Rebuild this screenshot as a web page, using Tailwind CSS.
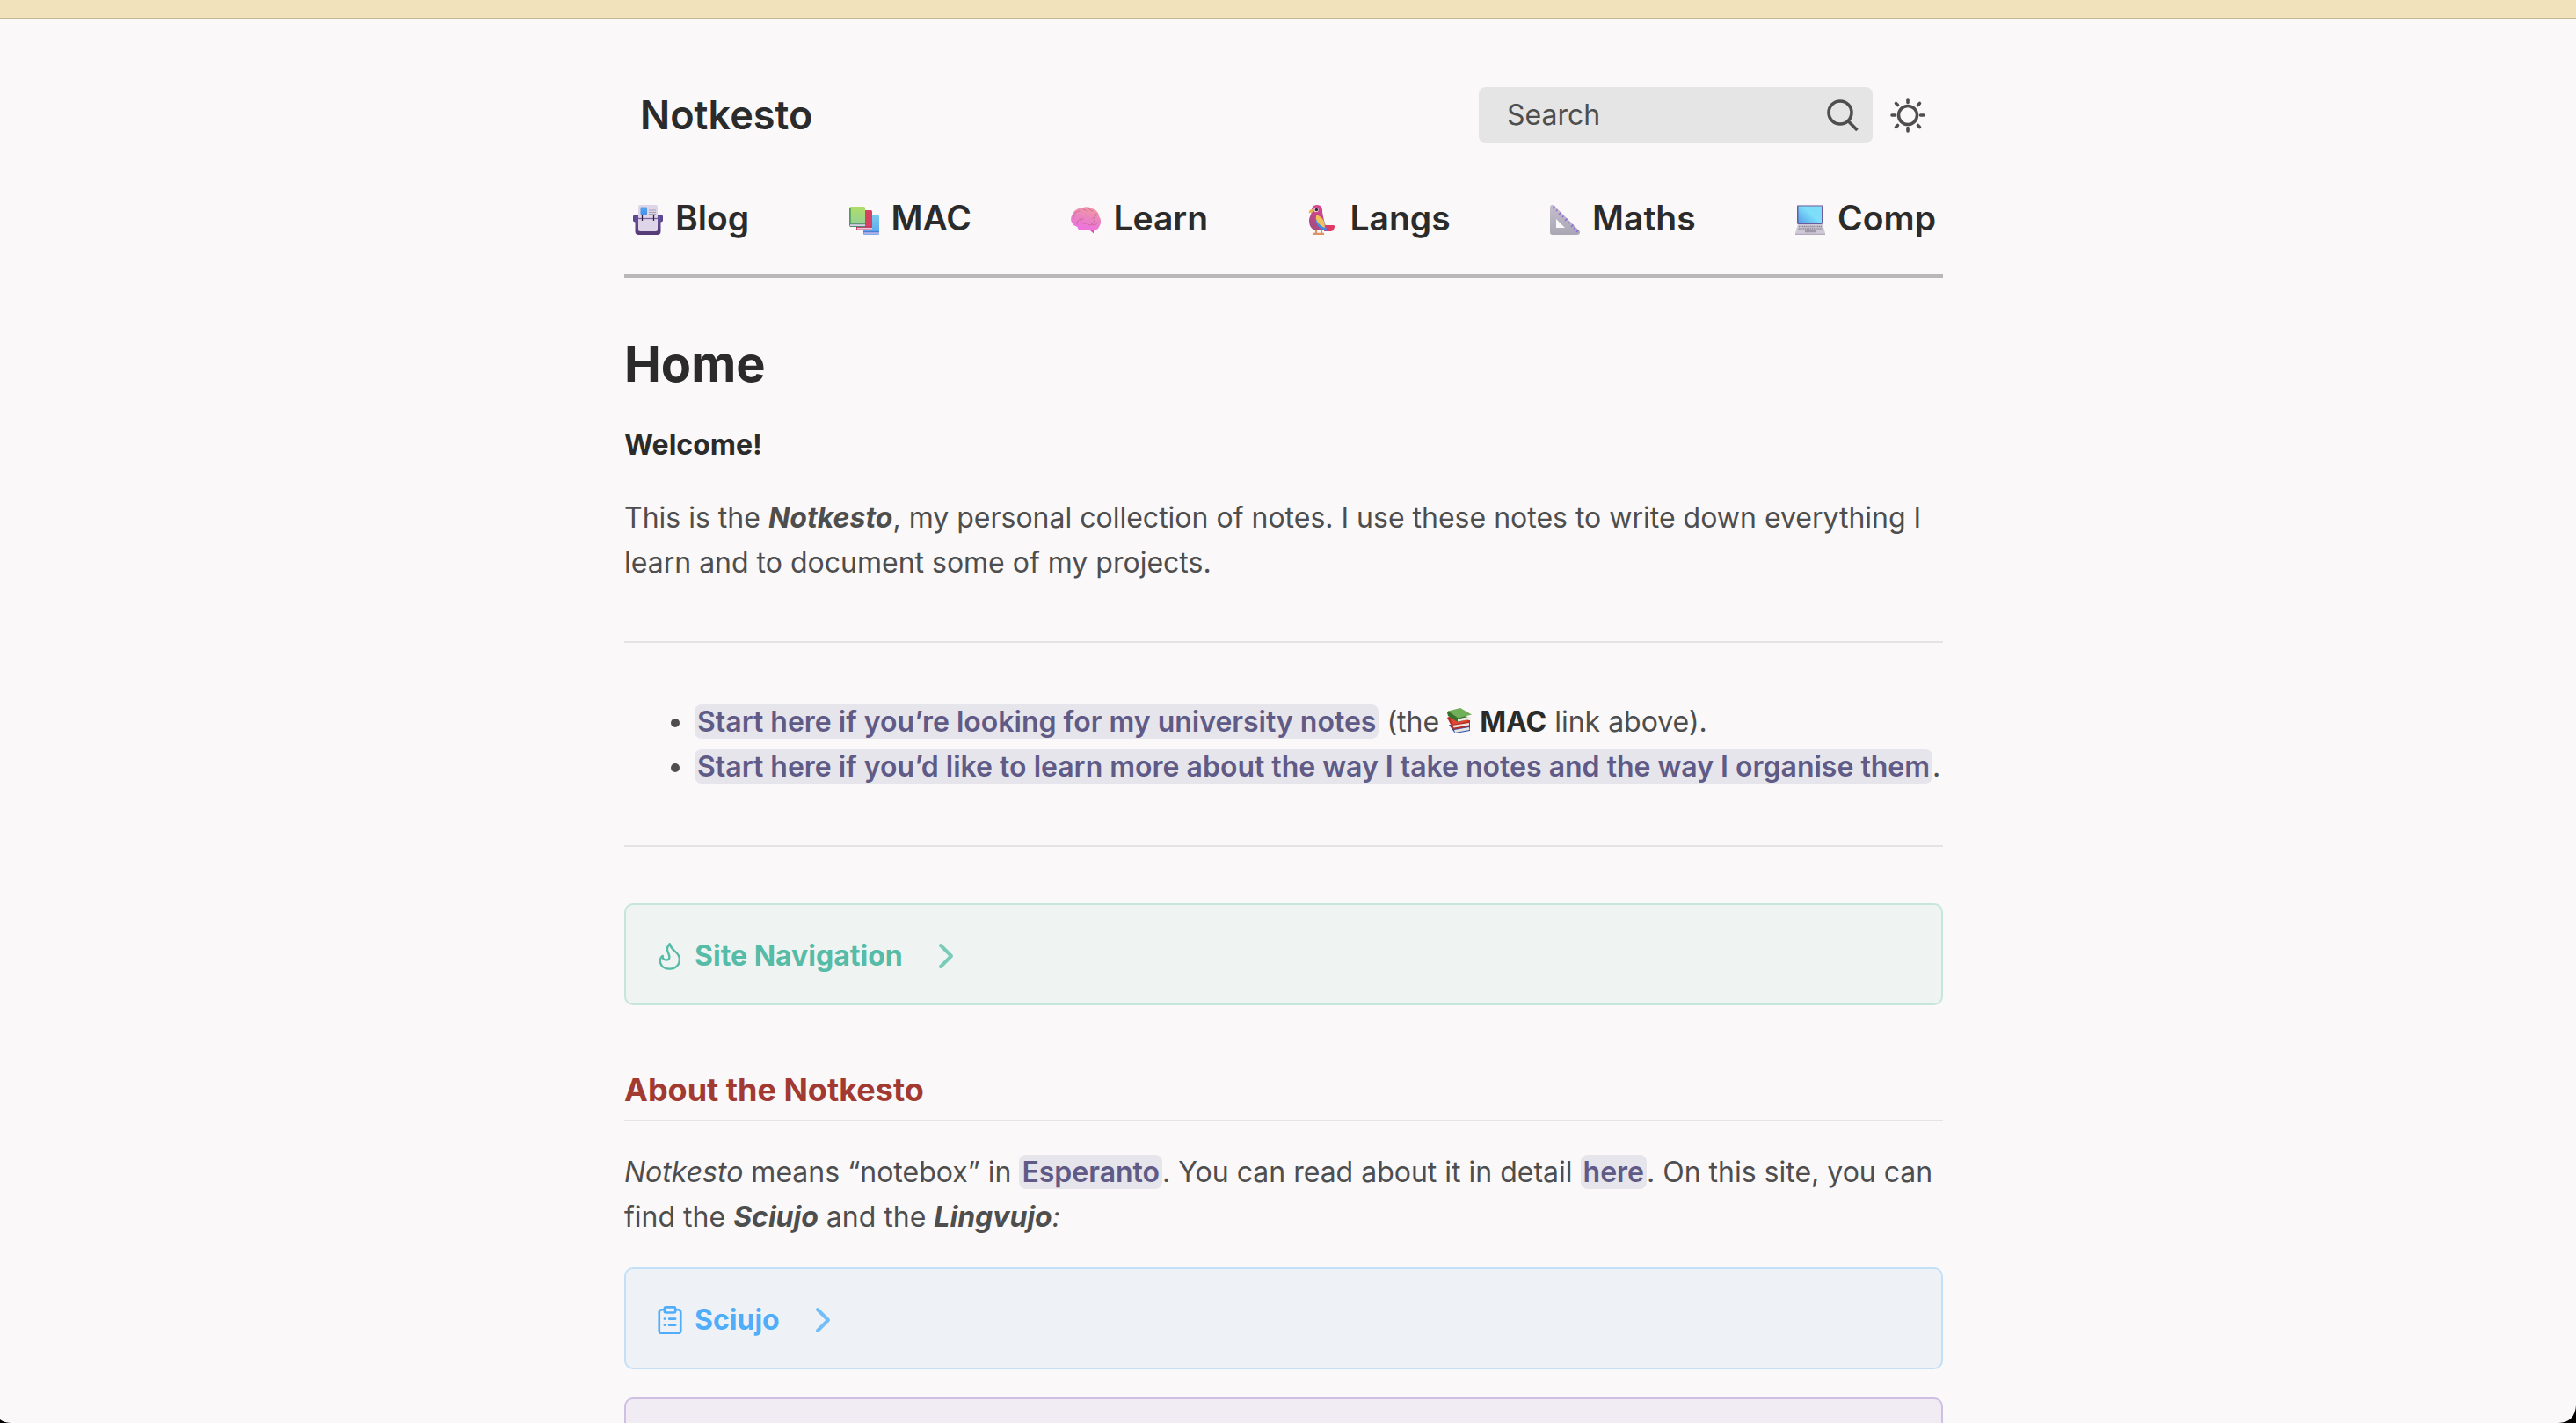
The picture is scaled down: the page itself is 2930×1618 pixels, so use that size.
<!DOCTYPE html>
<html lang="en">
<head>
<meta charset="utf-8">
<title>Notkesto</title>
<meta name="viewport" content="width=device-width, initial-scale=1">
<script src="https://cdn.jsdelivr.net/npm/@tailwindcss/browser@4"></script>
</head>
<body class="relative h-screen overflow-hidden bg-[#faf8f9] font-['Inter',sans-serif] text-[32px] leading-[51px] text-[#4e4e4e]">
<div class="h-[22px] border-b-2 border-[#c3b694] bg-[#f2e2bb]"></div>
<div class="pr-[10px]">
<div class="mx-auto max-w-[1500px]">

<header class="border-b-4 border-[#b9b8b8] pt-[77px] pb-10">
  <div class="flex items-center justify-between pr-5 pl-[18px]">
    <a href="#" class="text-[45px] leading-[64px] font-semibold text-[#2b2b2b]">Notkesto</a>
    <div class="flex items-center gap-5">
      <label class="flex h-16 w-[448px] items-center rounded-lg bg-[#e5e5e5] pr-4 pl-8">
        <input type="text" aria-label="Search" placeholder="Search" class="h-[62px] min-w-0 flex-1 self-start bg-transparent placeholder:text-[#4e4e4e] placeholder:opacity-100 outline-none">
        <svg class="size-9" viewBox="0 0 36 36" fill="none" stroke="#4e4e4e" stroke-width="3.6"><circle cx="15" cy="15" r="13"/><path d="M24 24.500l10.500 10.500"/></svg>
      </label>
      <button type="button" aria-label="Toggle theme">
        <svg class="size-10" viewBox="0 0 40 40" fill="none" stroke="#4e4e4e" stroke-width="3.600" stroke-linecap="round"><circle cx="20" cy="20" r="10.500"/><path d="M20 2v3.500M20 34.500V38M2 20h3.500M34.500 20H38M6.500 6.500l2 2M31.500 31.500l2 2M6.500 33.500l2-2M31.500 8.500l2-2"/></svg>
      </button>
    </div>
  </div>
  <nav class="mt-[61px] flex justify-between pr-2 pl-[10px] text-[39px] leading-[48px] font-semibold text-[#2b2b2b]">
    <a href="#" class="flex items-center gap-[14px]">
      <svg class="mt-1 size-[34px]" viewBox="0 0 34 34"><defs><linearGradient id="bag" x2="0" y2="1"><stop stop-color="#66509a"/><stop offset="1" stop-color="#563a76"/></linearGradient><linearGradient id="pic" x2="0" y2="1"><stop stop-color="#5ea2ea"/><stop offset="1" stop-color="#3f92ee"/></linearGradient></defs><rect x="0" y="11" width="34" height="8.500" rx="2.500" fill="#5a4794"/><path d="M2.500 13h29v17a4 4 0 0 1-4 4h-21a4 4 0 0 1-4-4z" fill="url(#bag)"/><rect x="6" y="0" width="22" height="16" rx="2" fill="#dfd5e8"/><rect x="8.500" y="2.500" width="7.500" height="8.500" rx="1" fill="url(#pic)"/><path d="M18 3.500h8M18 6h8M18 8.500h8M18 10.500h8" stroke="#aaa0b4" stroke-width="1.100"/><rect x="6" y="14" width="22" height="16" rx="2.500" fill="#dfd5e8"/><path d="M6 15.500h22" stroke="#7b62a4" stroke-width="1.300"/><path d="M10.500 12v6M23.500 12v6" stroke="#30223e" stroke-width="1.300"/></svg>
      Blog</a>
    <a href="#" class="flex items-center gap-[14px]">
      <svg class="mt-1 size-[34px]" viewBox="0 0 34 34"><defs><linearGradient id="gb" x2="0" y2="1"><stop stop-color="#b0de68"/><stop offset="1" stop-color="#8fd09a"/></linearGradient><linearGradient id="bb" x2="0" y2="1"><stop stop-color="#79cbee"/><stop offset="1" stop-color="#58a5ee"/></linearGradient></defs><rect x="16" y="11" width="18" height="23" rx="1.500" fill="url(#bb)"/><path d="M17 30.500h17v1.500l-1 1.500H17z" fill="#b2b0e8"/><path d="M16 30.500h18" stroke="#4b7dd2" stroke-width="1.300"/><rect x="8" y="6" width="18" height="23" rx="1.500" fill="#d64061"/><path d="M9 25.500h17v2.200H9z" fill="#e7c5dd"/><path d="M8 25.200h18M8.500 28.400h17" stroke="#b52b58" stroke-width="1"/><rect x="0" y="2" width="18" height="23" rx="1.500" fill="url(#gb)"/><path d="M.9 3v21" stroke="#539c60" stroke-width="1.800"/><path d="M1 21.800h17v2.200H1z" fill="#d5d1ea"/><path d="M1 21.700h17M1 24.500h17" stroke="#4e8068" stroke-width=".9"/></svg>
      MAC</a>
    <a href="#" class="flex items-center gap-[14px]">
      <svg class="mt-1 size-[34px]" viewBox="0 0 34 34"><defs><linearGradient id="br" x1=".7" y1="0" x2=".4" y2="1"><stop stop-color="#f49ba0"/><stop offset=".5" stop-color="#e984c0"/><stop offset="1" stop-color="#f06fe4"/></linearGradient></defs><path d="M20 27l2.500 2.500 3.500 3V27z" fill="#e24bbb"/><path d="M2 21C-1 18 0 13 2 11 3 6 9 3 14 3c3-1.500 9-.8 12 2 4 1.500 6 5 6 8 3 3 2.500 9 0 12-1 3-4 4-8 4H12c-3 0-4-2-4.500-4C5 24 3 23.500 2 21z" fill="url(#br)"/><path d="M3 15c0-5 3-8 7-8M14 5c2 0 3 1 4 2M19 4c3 0 3 3 6 3M7 22c0-5 3-6 7-6M11 17c1 4 4 5 7 4M20 23c4 0 7-2 7-6M29 10c0 3-2 5-4 5M24 22c3 2 5 0 7-2" fill="none" stroke="#cb6597" stroke-width=".9" stroke-linecap="round"/></svg>
      Learn</a>
    <a href="#" class="flex items-center gap-[14px]">
      <svg class="mt-1 size-[34px]" viewBox="0 0 34 34"><defs><linearGradient id="pr" x1=".7" x2=".3" y2="1"><stop stop-color="#df4392"/><stop offset="1" stop-color="#a24c7f"/></linearGradient></defs><path d="M9 29v4M15 29v4M5.500 32.800h12.500" stroke="#dd9262" stroke-width="2.200"/><path d="M18 23h10.500a1.500 1.500 0 0 1 1.500 2c-.5 3-2 5-5 5h-7z" fill="#df3a65"/><path d="M4 6c0-4 3-6 6-6 4 0 6 3 6 6 0 6 3 12 4 23h-9C4 29 1 24 1 18c0-5 3-7 3-12z" fill="url(#pr)"/><path d="M4.500 5C2 5 .5 7 .8 9.500L3 8.800c3 .6 4-3.800 1.500-3.800z" fill="#efb44d"/><circle cx="9" cy="5.500" r="2.700" fill="#e8d8df"/><circle cx="9.400" cy="5.500" r="1.700" fill="#342a37"/><path d="M8 14c-.5 7 4 13.500 13 16-.5-5-2-11-5-14z" fill="#4388e4"/><path d="M9.500 11.500C7 17 12 23 18.500 26 20 18 15 13 9.500 11.500z" fill="#f1c158"/></svg>
      Langs</a>
    <a href="#" class="flex items-center gap-[14px]">
      <svg class="mt-1 size-[34px]" viewBox="0 0 34 34"><defs><linearGradient id="sq" x2="0" y2="1"><stop stop-color="#c5bdcc"/><stop offset="1" stop-color="#aaa7b5"/></linearGradient></defs><path fill-rule="evenodd" d="M0 3C0 0 3-1 5 1l28 28c2 2 1 5-2 5H3a3 3 0 0 1-3-3zM7 16v10h10z" fill="url(#sq)"/><path d="M5.500 1.500L3 4M8.500 5.500L7 7M12.500 8.500L10 11M15.500 12.500L14 14M19.500 15.500L17 18M22.500 19.500L21 21M26.500 22.500L24 25M28.500 26L27 27.500M32.500 28.500L30 31" stroke="#8f69df" stroke-width="1.500"/></svg>
      Maths</a>
    <a href="#" class="flex items-center gap-[14px]">
      <svg class="mt-1 size-[34px]" viewBox="0 0 34 34"><defs><linearGradient id="scr" y1="1" x2="1" y2=".2"><stop stop-color="#559fea"/><stop offset=".6" stop-color="#7ddff9"/><stop offset="1" stop-color="#7eddf8"/></linearGradient></defs><rect x="2" y="0" width="29" height="22" rx="1.500" fill="#6d5a9d"/><path d="M3 .6h28" stroke="#b4acc9"/><rect x="3.500" y="1.500" width="26.500" height="19" fill="url(#scr)"/><path d="M3 22h28l3 10v2H0v-2z" fill="#cfc9d5"/><path d="M4 24.500h26M3.500 27h27" stroke="#8d8498" stroke-width="1.500" stroke-dasharray="1.300 .6"/><rect x="11" y="29" width="12" height="2.300" fill="#9f98a9"/><path d="M0 33.300h34" stroke="#aba2b8"/></svg>
      Comp</a>
  </nav>
</header>

<main>
  <h1 class="mt-16 text-[56px] leading-[68px] font-bold text-[#2b2b2b]">Home</h1>
  <p class="mt-8 font-bold text-[#2b2b2b]">Welcome!</p>
  <p class="mt-8">This is the <em class="font-bold">Notkesto</em>, my personal collection of notes. I use these notes to write down everything I learn and to document some of my projects.</p>
  <hr class="mt-16 mb-16 border-t-2 border-[#e5e3e4]">
  <ul class="list-disc pl-20">
    <li><a href="#" class="rounded-lg bg-[#e6e5eb] px-[3px] font-semibold text-[#5f5a86]">Start here if you’re looking for my university notes</a> (the
      <svg class="inline-block h-[30px] w-7 align-[-3px]" viewBox="0 0 28 30"><path d="M2 19l7 10 17-3V20z" fill="#34509c"/><path d="M8 25l17-3 .5 3L9 28z" fill="#e3e4e8"/><path d="M0 11l2-1 24 4v7L7 24.500z" fill="#b92d24"/><path d="M6 20l19-3v2.500L7.500 22.500z" fill="#eee5e1"/><path d="M3 12l16 1 6 2-18 4z" fill="#df4934"/><path d="M0 5l2-2 24 8 1 1-15 4L1 9z" fill="#39712e"/><path d="M12 12.500l15-3v3l-15 3z" fill="#eef0e9"/><path d="M1 3.500L15 0l13 7.500-15.500 4z" fill="#70ae57"/></svg>
      <strong class="font-bold text-[#2b2b2b]">MAC</strong> link above).</li>
    <li class="whitespace-nowrap"><a href="#" class="rounded-lg bg-[#e6e5eb] px-[3px] font-semibold text-[#5f5a86]">Start here if you’d like to learn more about the way I take notes and the way I organise them</a>.</li>
  </ul>
  <hr class="mt-16 mb-16 border-t-2 border-[#e5e3e4]">

  <details class="rounded-[10px] border-2 border-[#c5e6da] bg-[#eff3f1] px-[34px] pt-8 pb-[29px] text-[#56bba7]">
    <summary class="flex items-center font-bold">
      <svg class="size-8" viewBox="0 0 24 24" fill="none" stroke="currentColor" stroke-width="1.800" stroke-linecap="round" stroke-linejoin="round"><path d="M11.800 1.600C9.200 4.500 9.200 6.500 10.400 9c2 4.300 1.200 6.600-1.600 6.300-2 0-3.300-1.200-3-3.400C1.800 14.500 3 23 12 23c5 0 8.200-3.700 8.200-7.800 0-3-1.400-5.100-4-7.200-2.400-1.900-3.600-3.400-4.400-6.400z"/></svg>
      <span class="ml-3">Site Navigation</span>
      <svg class="ml-10 h-[30px] w-5" viewBox="0 0 20 30" fill="none" stroke="#7bcbb9" stroke-width="4" stroke-linecap="round" stroke-linejoin="round"><path d="M3 3l12 12L3 27"/></svg>
    </summary>
  </details>

  <h2 class="mt-[74px] border-b-2 border-[#e5e3e4] pb-3 text-[36px] leading-[44px] font-bold text-[#a23a31]">About the Notkesto</h2>
  <p class="mt-8"><em>Notkesto</em> means “notebox” in <a href="#" class="rounded-lg bg-[#e6e5eb] px-[3px] font-semibold text-[#5f5a86]">Esperanto</a>. You can read about it in detail <a href="#" class="rounded-lg bg-[#e6e5eb] px-[3px] font-semibold text-[#5f5a86]">here</a>. On this site, you can find the <em class="font-bold">Sciujo</em> and the <em><b class="font-bold">Lingvujo</b>:</em></p>

  <details class="mt-8 rounded-[10px] border-2 border-[#c3e0f8] bg-[#eef2f7] px-[34px] pt-8 pb-[29px] text-[#4fadf9]">
    <summary class="flex items-center font-bold">
      <svg class="size-8" viewBox="0 0 32 34" fill="none" stroke="currentColor" stroke-width="2.800" stroke-linecap="round" stroke-linejoin="round"><path d="M9 4.500H6a3 3 0 0 0-3 3V30a3 3 0 0 0 3 3h20a3 3 0 0 0 3-3V7.500a3 3 0 0 0-3-3h-3"/><rect x="9.500" y="1.500" width="13" height="6.500" rx="1.500"/><path d="M9.500 15.500h.1M15 15.500h7.500M9.500 23h.1M15 23h7.500"/></svg>
      <span class="ml-3">Sciujo</span>
      <svg class="ml-10 h-[30px] w-5" viewBox="0 0 20 30" fill="none" stroke="#73bef9" stroke-width="4" stroke-linecap="round" stroke-linejoin="round"><path d="M3 3l12 12L3 27"/></svg>
    </summary>
  </details>

  <div class="mt-8 h-[116px] rounded-[10px] border-2 border-[#cfbfe3] bg-[#f1ecf3]"></div>
</main>
</div>
</div>
<svg class="absolute bottom-0 left-0 h-1 w-3" viewBox="0 0 12 4"><path d="M0 0q4 3.500 12 4H0z"/></svg>
<svg class="absolute right-0 bottom-0 size-5" viewBox="0 0 20 20"><path d="M20 0Q19 19 0 20h20z"/></svg>
</body>
</html>
